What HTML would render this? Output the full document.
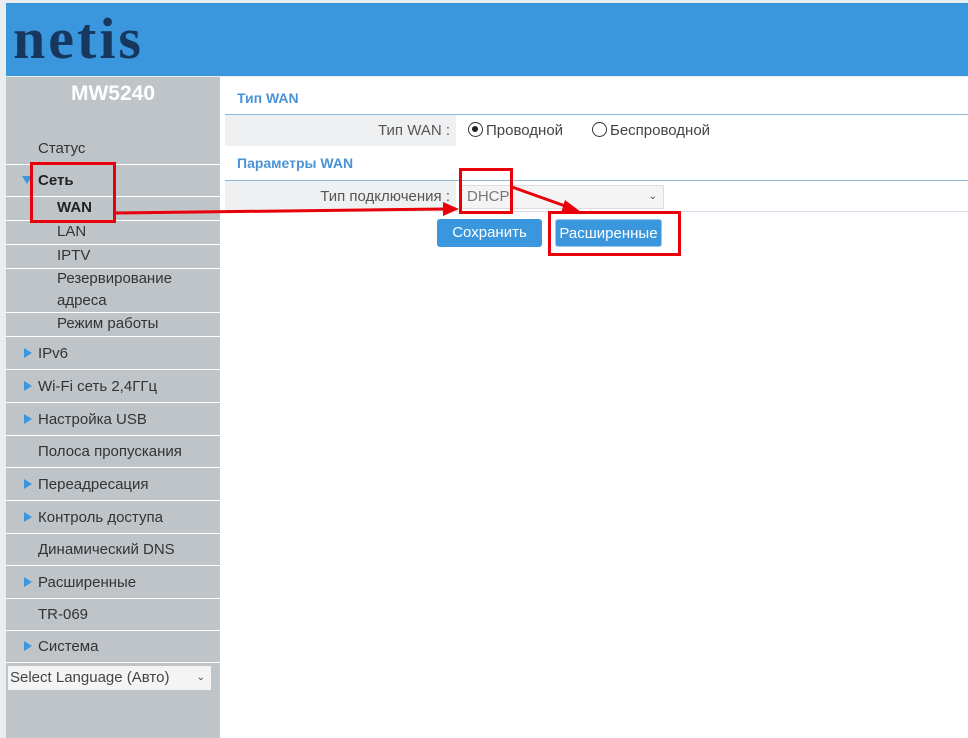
<!DOCTYPE html>
<html><head><meta charset="utf-8"><style>
*{margin:0;padding:0;box-sizing:border-box}
body{width:968px;height:738px;background:#e9edf0;font-family:"Liberation Sans",Arial,sans-serif;position:relative;overflow:hidden}
#hdr{position:absolute;left:6px;top:3px;width:962px;height:73px;background:#3a97de}
#logo{position:absolute;left:7px;top:2px;font-family:"Liberation Serif",serif;font-weight:bold;font-size:58px;color:#17375e;letter-spacing:3px}
#side{position:absolute;left:6px;top:77px;width:214px;height:661px;background:#bfc4c9}
#model{position:absolute;left:0;width:214px;top:5px;text-align:center;color:#fff;font-weight:bold;font-size:21px}
.it{position:absolute;left:0;width:214px;border-bottom:1px solid #fff;font-size:15px;color:#333}
.it span{position:absolute;left:32px;bottom:7px}
.it.sub span{left:51px;bottom:4px}
.tri{position:absolute;left:18px;bottom:11px;width:0;height:0;border-top:5px solid transparent;border-bottom:5px solid transparent;border-left:8px solid #3a97de}
#content{position:absolute;left:220px;top:77px;width:748px;height:661px;background:#fff}
.h{position:absolute;left:17px;color:#4a92d6;font-weight:bold;font-size:14px}
.row{position:absolute;left:5px;width:743px;height:32px;border-top:1px solid #8fb7d9;background:#fff}
.lbl{position:absolute;left:0;top:0;width:231px;height:31px;background:#eef0f2;text-align:right;padding-right:6px;line-height:31px;color:#555;font-size:15px}
.btn{position:absolute;top:142px;height:28px;background:#3a97de;color:#fff;font-size:15px;line-height:28px;text-align:center;border-radius:3px}
.red{position:absolute;border:3px solid #e8000b}
</style></head><body>
<div id="hdr"><div id="logo">netis</div></div>
<div id="side">
<div id="model">MW5240</div>
<div class="it" style="top:53px;height:35px"><span>Статус</span></div>
<div class="it" style="top:88px;height:32px"><div class="tri" style="border-left:5px solid transparent;border-right:5px solid transparent;border-top:8px solid #3a97de;border-bottom:0;bottom:12px;left:16px"></div><span style="font-weight:bold;color:#222">Сеть</span></div>
<div class="it sub" style="top:120px;height:24px"><span style="font-weight:bold;color:#222">WAN</span></div>
<div class="it sub" style="top:144px;height:24px"><span>LAN</span></div>
<div class="it sub" style="top:168px;height:24px"><span>IPTV</span></div>
<div class="it sub" style="top:192px;height:44px"><span style="line-height:22px;bottom:0">Резервирование<br>адреса</span></div>
<div class="it sub" style="top:236px;height:24px"><span>Режим работы</span></div>
<div class="it" style="top:260px;height:33px"><div class="tri"></div><span>IPv6</span></div>
<div class="it" style="top:293px;height:33px"><div class="tri"></div><span>Wi-Fi сеть 2,4ГГц</span></div>
<div class="it" style="top:326px;height:33px"><div class="tri"></div><span>Настройка USB</span></div>
<div class="it" style="top:359px;height:32px"><span>Полоса пропускания</span></div>
<div class="it" style="top:391px;height:33px"><div class="tri"></div><span>Переадресация</span></div>
<div class="it" style="top:424px;height:33px"><div class="tri"></div><span>Контроль доступа</span></div>
<div class="it" style="top:457px;height:32px"><span>Динамический DNS</span></div>
<div class="it" style="top:489px;height:33px"><div class="tri"></div><span>Расширенные</span></div>
<div class="it" style="top:522px;height:32px"><span>TR-069</span></div>
<div class="it" style="top:554px;height:32px"><div class="tri"></div><span>Система</span></div>
<div style="position:absolute;left:2px;top:589px;width:203px;height:24px;background:#f4f4f4;font-size:15px;color:#444;line-height:24px;padding-left:2px">Select Language (Авто)<span style="position:absolute;right:6px;font-size:10px">&#8964;</span></div>
</div>
<div id="content">
<div class="h" style="top:13px">Тип WAN</div>
<div class="row" style="top:37px"><div class="lbl">Тип WAN :</div>
<div style="position:absolute;left:243px;top:7px;width:15px;height:15px;border:1.5px solid #333;border-radius:50%"><div style="position:absolute;left:3px;top:3px;width:6px;height:6px;background:#222;border-radius:50%"></div></div>
<div style="position:absolute;left:261px;top:0;line-height:31px;font-size:15px;color:#444">Проводной</div>
<div style="position:absolute;left:367px;top:7px;width:15px;height:15px;border:1.5px solid #333;border-radius:50%"></div>
<div style="position:absolute;left:385px;top:0;line-height:31px;font-size:15px;color:#444">Беспроводной</div>
</div>
<div class="h" style="top:78px">Параметры WAN</div>
<div class="row" style="top:103px;border-bottom:1px solid #dde"><div class="lbl">Тип подключения :</div>
<div style="position:absolute;left:236px;top:4px;width:203px;height:24px;background:#f4f4f4;border:1px solid #ddd;font-size:15px;color:#777;line-height:22px;padding-left:5px">DHCP<span style="position:absolute;right:6px;font-size:10px;color:#444">&#8964;</span></div>
</div>
<div class="btn" style="left:217px;width:105px">Сохранить</div>
<div class="btn" style="left:335px;width:107px;border:1px solid #9cc8ee">Расширенные</div>
</div>
<div class="red" style="left:30px;top:162px;width:86px;height:61px"></div>
<div class="red" style="left:459px;top:168px;width:54px;height:46px"></div>
<div class="red" style="left:548px;top:211px;width:133px;height:45px"></div>
<svg style="position:absolute;left:0;top:0" width="968" height="738">
<line x1="115" y1="213" x2="445" y2="209" stroke="#e8000b" stroke-width="3"/>
<polygon points="459,209 443,202 443,216" fill="#e8000b"/>
<line x1="512" y1="187" x2="568" y2="207" stroke="#e8000b" stroke-width="3"/>
<polygon points="581,212 565,200 561,213" fill="#e8000b"/>
</svg>
</body></html>
